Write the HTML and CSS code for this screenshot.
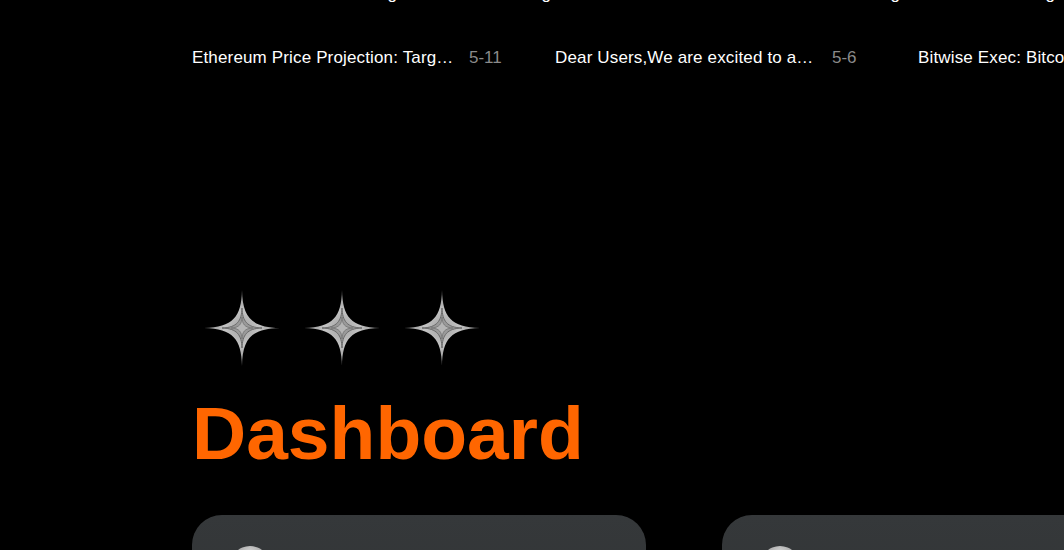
FILE: index.html
```html
<!DOCTYPE html>
<html lang="en">
<head>
<meta charset="utf-8">
<title>Dashboard</title>
<link rel="stylesheet" href="styles.css">
</head>
<body>
<div class="page">
  <div class="ticker ticker-prev">
    <span class="prev-cell">Rising</span>
    <span class="prev-cell">Strong</span>
    <span class="prev-cell">Trading</span>
    <span class="prev-cell">Long</span>
  </div>
  <div class="ticker">
    <div class="news-item">
      <span class="news-title">Ethereum Price Projection: Target $5,000 by Year End</span>
      <span class="news-date">5-11</span>
    </div>
    <div class="news-item">
      <span class="news-title">Dear Users,We are excited to announce the launch</span>
      <span class="news-date">5-6</span>
    </div>
    <div class="news-item">
      <span class="news-title">Bitwise Exec: Bitcoin Could Reach New Highs</span>
      <span class="news-date">5-2</span>
    </div>
  </div>

  <div class="sparkles">
    <div class="sparkle">
      <svg width="76" height="76" viewBox="0 0 76 76">
        <defs>
          <radialGradient id="sg" cx="50%" cy="50%" r="50%">
            <stop offset="0" stop-color="#8c8c8c"/>
            <stop offset="0.2" stop-color="#b0b0b0"/>
            <stop offset="0.45" stop-color="#c4c4c4"/>
            <stop offset="1" stop-color="#8a8a8a"/>
          </radialGradient>
        </defs>
        <path d="M38 0 C38.6 27 47 37.3 76 38 C47 38.7 38.6 49 38 76 C37.4 49 29 38.7 0 38 C29 37.3 37.4 27 38 0 Z" fill="url(#sg)"/>
        <path d="M38 18 C38.4 31 43 37.6 58 38 C43 38.4 38.4 45 38 58 C37.6 45 33 38.4 18 38 C33 37.6 37.6 31 38 18 Z" fill="#9a9a9a" stroke="#6a6a6a" stroke-width="1"/>
        <path d="M38 27 C38.3 34 40.5 37.7 49 38 C40.5 38.3 38.3 42 38 49 C37.7 42 35.5 38.3 27 38 C35.5 37.7 37.7 34 38 27 Z" fill="#b5b5b5" stroke="#727272" stroke-width="0.8"/>
      </svg>
    </div>
    <div class="sparkle">
      <svg width="76" height="76" viewBox="0 0 76 76">
        <path d="M38 0 C38.6 27 47 37.3 76 38 C47 38.7 38.6 49 38 76 C37.4 49 29 38.7 0 38 C29 37.3 37.4 27 38 0 Z" fill="url(#sg)"/>
        <path d="M38 18 C38.4 31 43 37.6 58 38 C43 38.4 38.4 45 38 58 C37.6 45 33 38.4 18 38 C33 37.6 37.6 31 38 18 Z" fill="#9a9a9a" stroke="#6a6a6a" stroke-width="1"/>
        <path d="M38 27 C38.3 34 40.5 37.7 49 38 C40.5 38.3 38.3 42 38 49 C37.7 42 35.5 38.3 27 38 C35.5 37.7 37.7 34 38 27 Z" fill="#b5b5b5" stroke="#727272" stroke-width="0.8"/>
      </svg>
    </div>
    <div class="sparkle">
      <svg width="76" height="76" viewBox="0 0 76 76">
        <path d="M38 0 C38.6 27 47 37.3 76 38 C47 38.7 38.6 49 38 76 C37.4 49 29 38.7 0 38 C29 37.3 37.4 27 38 0 Z" fill="url(#sg)"/>
        <path d="M38 18 C38.4 31 43 37.6 58 38 C43 38.4 38.4 45 38 58 C37.6 45 33 38.4 18 38 C33 37.6 37.6 31 38 18 Z" fill="#9a9a9a" stroke="#6a6a6a" stroke-width="1"/>
        <path d="M38 27 C38.3 34 40.5 37.7 49 38 C40.5 38.3 38.3 42 38 49 C37.7 42 35.5 38.3 27 38 C35.5 37.7 37.7 34 38 27 Z" fill="#b5b5b5" stroke="#727272" stroke-width="0.8"/>
      </svg>
    </div>
  </div>

  <h1 class="title">Dashboard</h1>

  <div class="cards">
    <div class="card">
      <div class="coin"></div>
    </div>
    <div class="card">
      <div class="coin"></div>
    </div>
  </div>
</div>
</body>
</html>
```

FILE: styles.css
```css
html, body {
  margin: 0;
  padding: 0;
  background: #000;
  overflow: hidden;
}

body {
  font-family: "Liberation Sans", Arial, sans-serif;
  color: #fff;
  width: 1064px;
  height: 550px;
}

.page {
  padding-left: 192px;
}

.ticker {
  display: flex;
  white-space: nowrap;
  font-size: 17px;
  line-height: 20px;
  margin-top: 44px;
  width: 872px;
  overflow: hidden;
}

.ticker-prev {
  margin-top: -16px;
  display: grid;
  grid-template-columns: 205px 154px 349px 155px;
}

.prev-cell {
  text-align: right;
}

.news-item {
  flex: 0 0 363px;
  display: flex;
}

.news-title {
  width: 265px;
  overflow: hidden;
  text-overflow: ellipsis;
  white-space: nowrap;
  letter-spacing: 0.15px;
  color: #fff;
}

.news-date {
  margin-left: 12px;
  color: #8a8a8a;
}

.sparkles {
  display: flex;
  margin-top: 222px;
  height: 76px;
}

.sparkle {
  width: 100px;
  display: flex;
  justify-content: center;
}

.sparkle svg {
  display: block;
}

.title {
  margin: 30px 0 0 0;
  font-size: 75px;
  line-height: 75px;
  font-weight: 700;
  color: #ff6600;
}

.cards {
  display: flex;
  gap: 76px;
  margin-top: 44px;
}

.card {
  flex: 0 0 454px;
  height: 200px;
  border-radius: 30px;
  background: linear-gradient(180deg, #35383a 0%, #2f3132 100%);
  padding: 31px 0 0 38px;
  box-sizing: border-box;
}

.coin {
  width: 40px;
  height: 40px;
  border-radius: 50%;
  background: radial-gradient(circle at 50% 20%, #d8d8d8 0%, #9a9a9a 45%, #5c5c5c 100%);
}
```
